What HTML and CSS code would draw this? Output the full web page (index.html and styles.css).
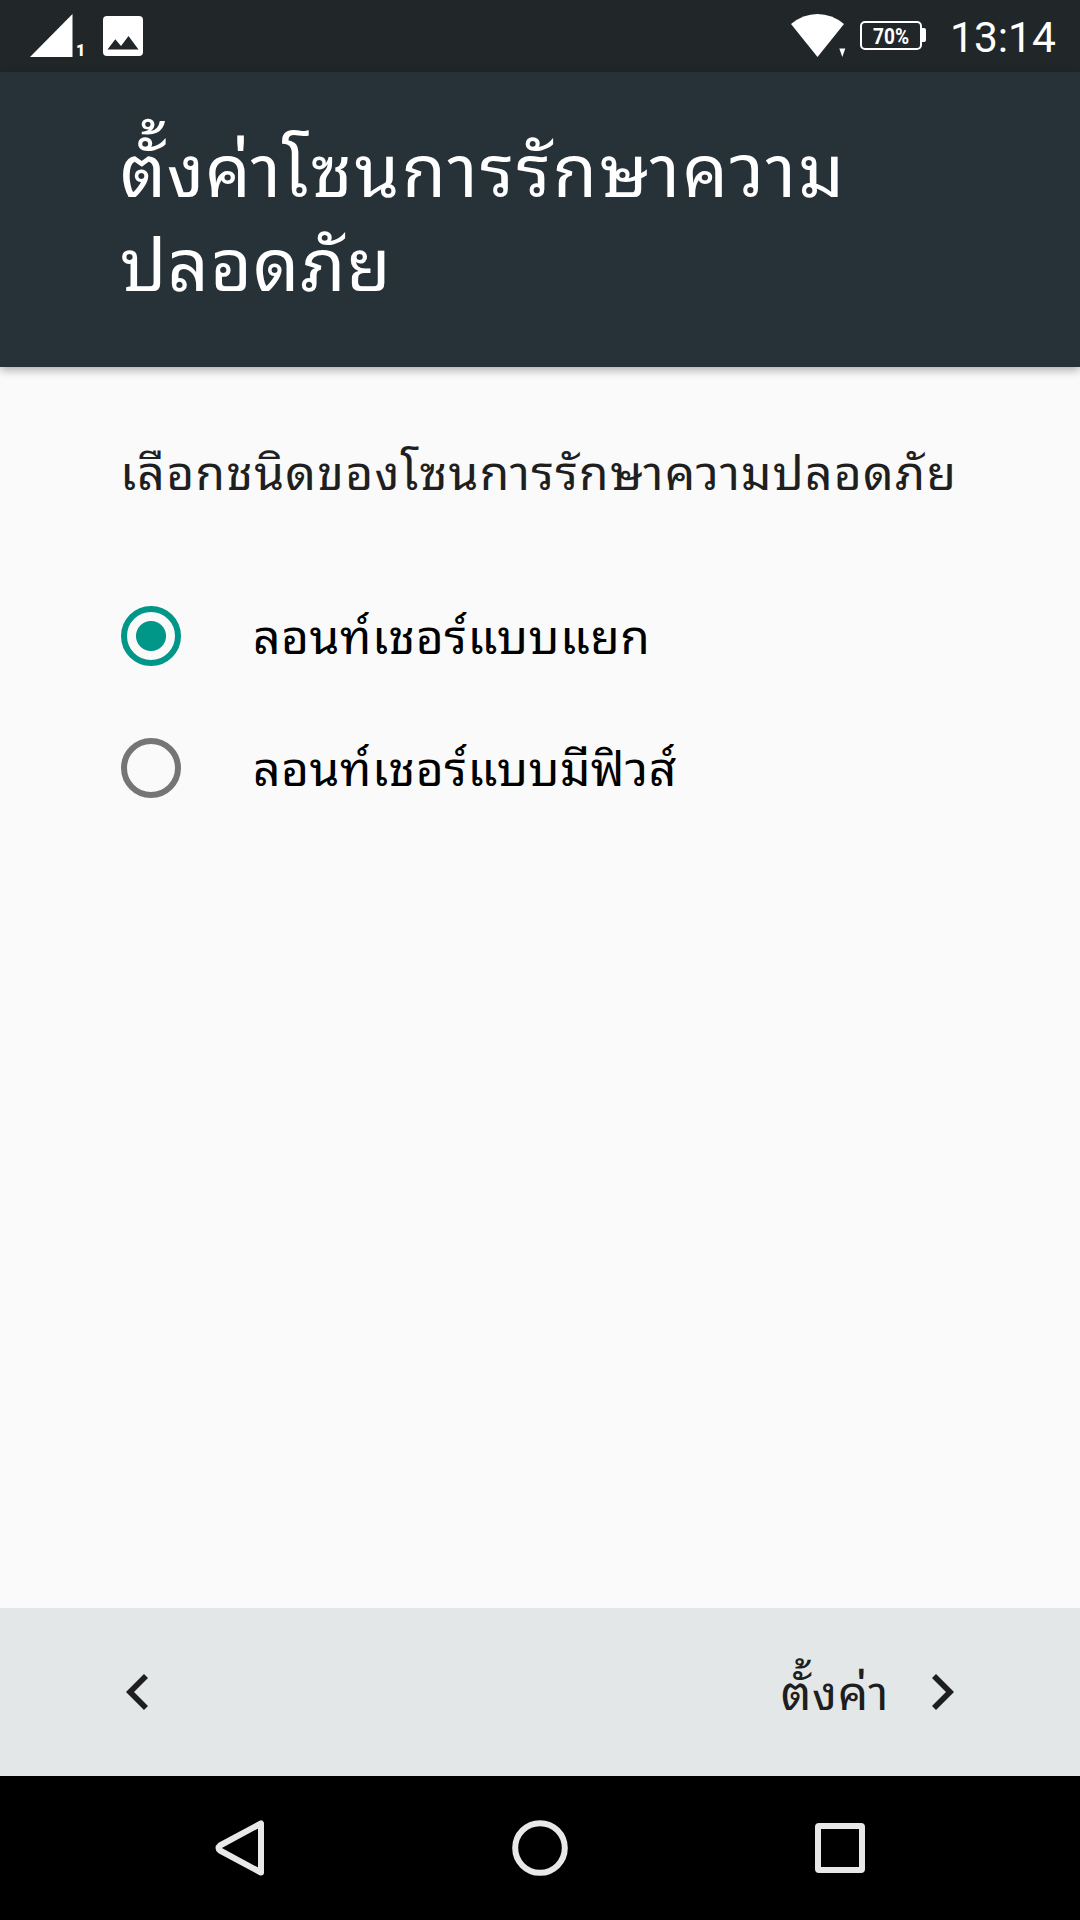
FILE: index.html
```html
<!DOCTYPE html>
<html lang="th">
<head>
<meta charset="utf-8">
<title>ตั้งค่าโซนการรักษาความปลอดภัย</title>
<link rel="stylesheet" href="styles.css">
</head>
<body>
<div class="status-bar">
  <div class="status-group">
    <svg class="icon" width="60" height="72" viewBox="0 0 60 72">
      <path d="M0 57 42.500 14V57z" fill="#fff"/>
      <text class="sim-number" x="46" y="56">1</text>
    </svg>
    <svg class="icon" width="40" height="72" viewBox="0 0 40 72">
      <rect y="16" width="40" height="40" rx="4" fill="#fff"/>
      <path d="M4.500 49.500 12.300 39.300 18 46 25.500 36 35.500 49.500z" fill="#212729"/>
    </svg>
  </div>
  <div class="status-group">
    <svg class="icon" width="56" height="72" viewBox="0 0 56 72">
      <path d="M0 24Q12 14 26.500 14T53 24L26.500 57z" fill="#fff"/>
      <path d="M48.300 48.500h6L51.300 57z" fill="#fff"/>
    </svg>
    <svg class="icon battery" width="67" height="72" viewBox="0 0 67 72">
      <rect x="1" y="22" width="60" height="27" rx="4" fill="none" stroke="#fff" stroke-width="2"/>
      <path d="M62 28h2q2 0 2 2v10q0 2-2 2h-2z" fill="#fff"/>
      <text class="battery-level" x="13" y="43.700" textLength="36" lengthAdjust="spacingAndGlyphs">70%</text>
    </svg>
    <span class="clock">13:14</span>
  </div>
</div>
<header class="header">
  <h1 class="title"><span class="title-lead">ตั้งค่า</span><span class="title-wide">โซนการรักษาความ</span><br>ปลอดภัย</h1>
</header>
<main class="content">
  <p class="prompt">เลือกชนิดของโซนการรักษาความปลอดภัย</p>
  <div class="option">
    <span class="radio radio-on"></span>
    <span class="option-label">ลอนท์เชอร์แบบแยก</span>
  </div>
  <div class="option">
    <span class="radio"></span>
    <span class="option-label">ลอนท์เชอร์แบบมีฟิวส์</span>
  </div>
</main>
<footer class="footer">
  <svg class="icon" width="22" height="36" viewBox="0 0 22 36"><path d="M20 2 4 18 20 34" fill="none" stroke="#1e1e1e" stroke-width="5.700"/></svg>
  <div class="next">
    <span class="next-label">ตั้งค่า</span>
    <svg class="icon" width="22" height="36" viewBox="0 0 22 36"><path d="M2 2 18 18 2 34" fill="none" stroke="#1e1e1e" stroke-width="5.700"/></svg>
  </div>
</footer>
<nav class="nav-bar">
  <svg class="icon" width="60" height="60" viewBox="0 0 60 60"><path d="M51 5.500V54.500L10 32.500Q7 30 10 27.500z" fill="none" stroke="#e8e8e8" stroke-width="6" stroke-linejoin="round"/></svg>
  <svg class="icon" width="60" height="60" viewBox="0 0 60 60"><circle cx="30" cy="30" r="24.800" fill="none" stroke="#e8e8e8" stroke-width="6"/></svg>
  <svg class="icon" width="60" height="60" viewBox="0 0 60 60"><path fill="#e8e8e8" fill-rule="evenodd" d="M9 5H51Q55 5 55 9V51Q55 55 51 55H9Q5 55 5 51V9Q5 5 9 5zM11 11V49H49V11z"/></svg>
</nav>
</body>
</html>
```
FILE: styles.css
```css
* { box-sizing: border-box; }
body {
  margin: 0;
  width: 1080px;
  height: 1920px;
  display: flex;
  flex-direction: column;
  overflow: hidden;
  background: #fafafa;
  font-family: "Noto Sans Thai Looped", "Noto Sans", sans-serif;
}
.icon { display: block; flex: none; }

.status-bar {
  height: 72px;
  flex: none;
  display: flex;
  justify-content: space-between;
  padding: 0 24px 0 30px;
  background: #212729;
  color: #fff;
}
.status-group { display: flex; }
.status-group:first-child { gap: 13px; }
.sim-number { font: 900 16px Roboto, sans-serif; fill: #fff; }
.battery { margin-left: 13px; }
.battery-level { font: 700 22.500px Roboto, sans-serif; fill: #fff; }
.clock {
  width: 106px;
  margin-left: 23px;
  font: 42.500px/76px Roboto, sans-serif;
}

.header {
  height: 295px;
  flex: none;
  padding: 46px 120px 0;
  background: #263238;
  color: #fff;
  box-shadow: 0 3px 9px rgba(0, 0, 0, .32);
}
.title {
  margin: 0;
  font-size: 72px;
  font-weight: 400;
  line-height: 94px;
  letter-spacing: 1.100px;
  white-space: nowrap;
}
.title-lead { letter-spacing: .8px; }
.title-wide { letter-spacing: 2.300px; }

.content { flex: 1; padding: 67px 120px 0; }
.prompt {
  margin: 0 0 66px;
  font-size: 48px;
  line-height: 70px;
  letter-spacing: 1.240px;
  color: #1f1f1f;
  white-space: nowrap;
}
.option {
  height: 132px;
  display: flex;
  align-items: center;
  gap: 72px;
}
.radio {
  width: 60px;
  height: 60px;
  margin-left: 1px;
  border: 6px solid #757575;
  border-radius: 50%;
}
.radio-on {
  border-color: #009688;
  background: radial-gradient(circle, #009688 14.500px, transparent 15.500px);
}
.option-label {
  padding-bottom: 6px;
  font-size: 48px;
  line-height: 70px;
  letter-spacing: .5px;
  color: #000;
}

.footer {
  height: 168px;
  flex: none;
  display: flex;
  align-items: center;
  justify-content: space-between;
  padding: 0 126px;
  background: #e3e7e8;
  color: #1e1e1e;
}
.next { display: flex; align-items: center; gap: 43px; }
.next-label {
  padding-bottom: 6px;
  font-size: 48px;
  line-height: 70px;
  letter-spacing: .6px;
}

.nav-bar {
  height: 144px;
  flex: none;
  display: flex;
  align-items: center;
  justify-content: space-between;
  padding: 0 210px;
  background: #000;
}
```
